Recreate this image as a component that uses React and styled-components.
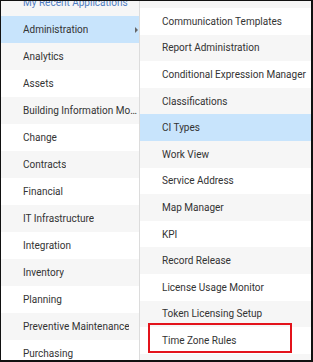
import styled, { createGlobalStyle } from "styled-components";

const mainItems = [
  "My Recent Applications",
  "Administration",
  "Analytics",
  "Assets",
  "Building Information Modeling",
  "Change",
  "Contracts",
  "Financial",
  "IT Infrastructure",
  "Integration",
  "Inventory",
  "Planning",
  "Preventive Maintenance",
  "Purchasing",
];

const subItems = [
  "Communication Templates",
  "Report Administration",
  "Conditional Expression Manager",
  "Classifications",
  "CI Types",
  "Work View",
  "Service Address",
  "Map Manager",
  "KPI",
  "Record Release",
  "License Usage Monitor",
  "Token Licensing Setup",
  "Time Zone Rules",
];

const App = () => {
  return (
    <>
      <GlobalStyle />
      <FrameStyle>
        <MainMenuStyle>
          <MainListStyle>
            {mainItems.map((item, i) => (
              <MainRowStyle
                key={item}
                $shaded={i % 2 === 0}
                $active={item === "Administration"}
                $header={i === 0}
              >
                <LabelText>{item}</LabelText>
                {item === "Administration" && <ArrowStyle />}
              </MainRowStyle>
            ))}
          </MainListStyle>
        </MainMenuStyle>
        <SubMenuStyle>
          {subItems.map((item, i) => (
            <SubRowStyle
              key={item}
              $shaded={i % 2 === 1}
              $active={item === "CI Types"}
              $marked={item === "Time Zone Rules"}
            >
              <SubLabelStyle $marked={item === "Time Zone Rules"}>{item}</SubLabelStyle>
            </SubRowStyle>
          ))}
        </SubMenuStyle>
      </FrameStyle>
    </>
  );
};

const GlobalStyle = createGlobalStyle`
  body {
    margin: 0;
    background: #ffffff;
    font-family: Roboto, "Noto Sans", sans-serif;
  }
`;

const FrameStyle = styled.div`
  width: 313px;
  height: 362px;
  box-sizing: border-box;
  border-left: 1px solid #111;
  border-top: 1px solid #111;
  border-right: 2px solid #111;
  border-bottom: 2px solid #111;
  display: flex;
  overflow: hidden;
  background: #f6f6f6;
`;

const MainMenuStyle = styled.div`
  width: 138px;
  flex-shrink: 0;
  border-right: 1px solid #dcdcdc;
  overflow: hidden;
  background: #ffffff;
`;

const MainListStyle = styled.div`
  margin-top: -12px;
  display: flex;
  flex-direction: column;
`;

const MainRowStyle = styled.div`
  height: 27px;
  flex-shrink: 0;
  display: flex;
  align-items: center;
  padding: 0 1px 0 22px;
  position: relative;
  font-size: 10px;
  color: ${(p) => (p.$header ? "#4f7cc1" : "#333333")};
  background: ${(p) =>
    p.$active ? "#c8e4fc" : p.$shaded ? "#f6f6f6" : "#ffffff"};
  white-space: nowrap;
  overflow: hidden;
`;

const LabelText = styled.span`
  overflow: hidden;
  text-overflow: ellipsis;
  white-space: nowrap;
`;

const ArrowStyle = styled.span`
  position: absolute;
  right: 1px;
  top: 11px;
  width: 0;
  height: 0;
  border-top: 3px solid transparent;
  border-bottom: 3px solid transparent;
  border-left: 3px solid #666666;
`;

const SubMenuStyle = styled.div`
  flex: 1;
  min-width: 0;
  display: flex;
  flex-direction: column;
  padding-top: 7px;
  overflow: hidden;
`;

const SubRowStyle = styled.div`
  height: 26.6px;
  flex-shrink: 0;
  display: flex;
  align-items: center;
  box-sizing: border-box;
  padding-left: ${(p) => (p.$marked ? "8px" : "22px")};
  font-size: 10px;
  color: #333333;
  background: ${(p) =>
    p.$active ? "#c8e4fc" : p.$shaded ? "#f6f6f6" : "#ffffff"};
  white-space: nowrap;
`;

const SubLabelStyle = styled.span`
  ${(p) =>
    p.$marked &&
    `
    width: 144px;
    height: 30px;
    margin-top: -4px;
    box-sizing: border-box;
    border: 2px solid #e3131b;
    padding: 4px 0 0 12px;
    display: flex;
    align-items: center;
  `}
`;

export default App;
